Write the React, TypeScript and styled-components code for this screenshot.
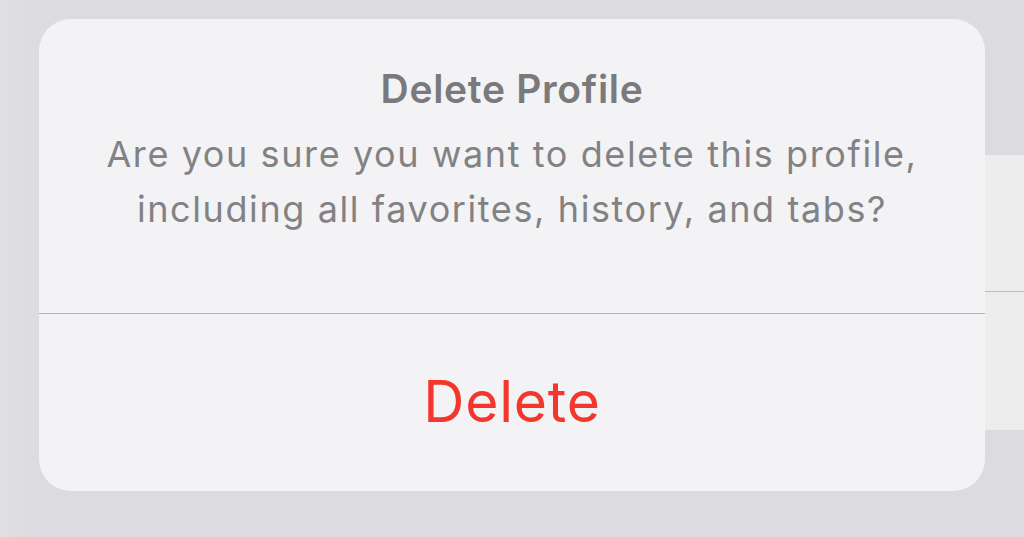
import React from "react";
import styled, { createGlobalStyle } from "styled-components";

const Global = createGlobalStyle`
  html, body {
    margin: 0;
    padding: 0;
    background: #dddde1;
    overflow: hidden;
  }
  #root {
    width: 1024px;
    height: 537px;
  }
`;

const Screen = styled.div`
  width: 1024px;
  height: 537px;
  display: flex;
  align-items: flex-start;
  background: linear-gradient(90deg, #e0e0e3 0px, #dcdce0 40px, #dcdce0 100%);
  font-family: Inter, "Noto Sans", "Liberation Sans", sans-serif;
`;

const Alert = styled.div`
  margin: 19px 0 0 39px;
  width: 946px;
  height: 472px;
  flex: none;
  border-radius: 32px;
  background: #f3f3f5;
  display: flex;
  flex-direction: column;
  overflow: hidden;
`;

const Body = styled.div`
  height: 295px;
  box-sizing: border-box;
  padding-top: 47px;
  display: flex;
  flex-direction: column;
  align-items: center;
  text-align: center;
  border-bottom: 1.5px solid #b4b4b6;
`;

const Title = styled.div`
  font-size: 39px;
  font-weight: 600;
  color: #7a7a7c;
  line-height: 46px;
  letter-spacing: 0.7px;
`;

const Message = styled.div`
  margin-top: 15px;
  font-size: 36px;
  font-weight: 400;
  color: #828284;
  line-height: 55px;
  letter-spacing: 1.6px;
`;

const ActionButton = styled.button<{ $destructive?: boolean }>`
  flex: 1;
  border: none;
  background: transparent;
  font-family: inherit;
  font-size: 57px;
  font-weight: 400;
  letter-spacing: 0.8px;
  color: ${(p) => (p.$destructive ? "#f3372c" : "#0a7aff")};
  display: flex;
  align-items: center;
  justify-content: center;
  padding: 0 0 2px 0;
  cursor: pointer;
`;

const SidePanel = styled.div`
  flex: 1;
  margin-top: 155px;
  height: 275px;
  background: #ededee;
  display: flex;
  flex-direction: column;
`;

const PanelRow = styled.div`
  height: 136px;
  border-bottom: 1.5px solid #bdbdbf;
  flex: none;
`;

export default function App() {
  return (
    <>
      <Global />
      <Screen>
        <Alert role="alertdialog">
          <Body>
            <Title>Delete Profile</Title>
            <Message>
              Are you sure you want to delete this profile,
              <br />
              including all favorites, history, and tabs?
            </Message>
          </Body>
          <ActionButton $destructive>Delete</ActionButton>
        </Alert>
        <SidePanel>
          <PanelRow />
        </SidePanel>
      </Screen>
    </>
  );
}
